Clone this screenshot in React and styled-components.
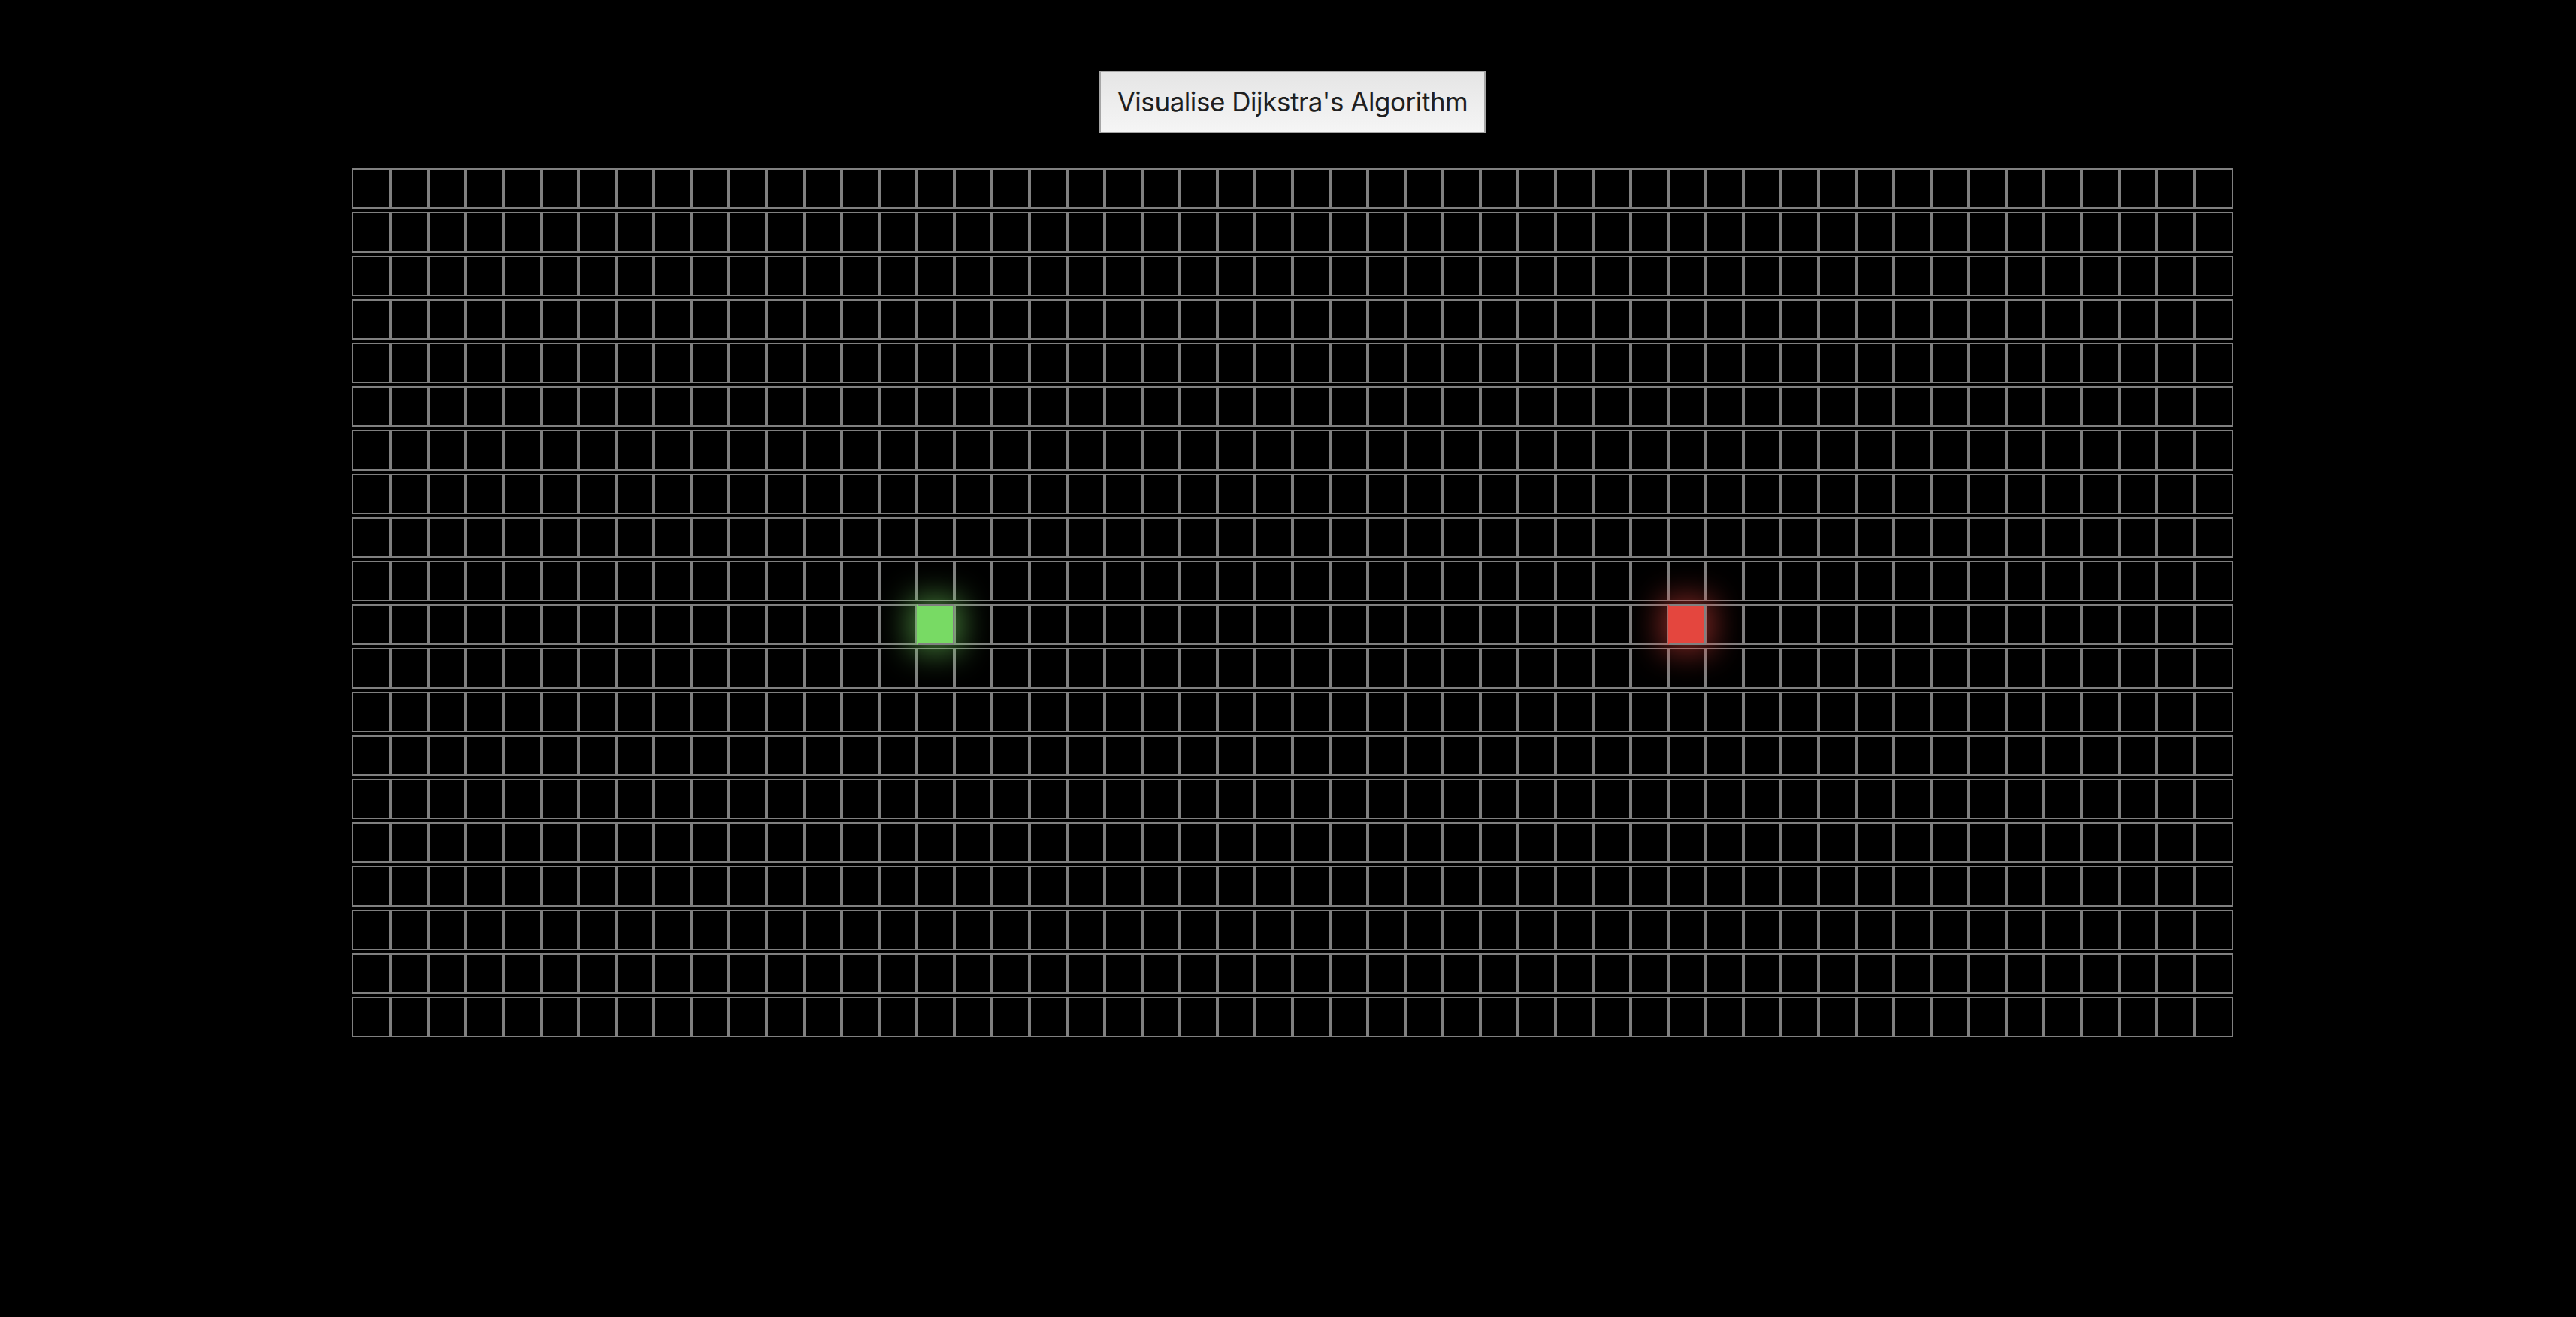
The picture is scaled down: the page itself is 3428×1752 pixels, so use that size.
import React from "react";
import styled, { createGlobalStyle, css } from "styled-components";

const ROWS = 20;
const COLS = 50;
const START = { row: 10, col: 15 };
const FINISH = { row: 10, col: 35 };

const GlobalStyle = createGlobalStyle`
  html, body {
    margin: 0;
    padding: 0;
    background: #000;
  }
  body {
    font-family: Inter, "Noto Sans", "Liberation Sans", sans-serif;
  }
`;

const Page = styled.main`
  min-height: 1752px;
  background: #000;
  display: flex;
  flex-direction: column;
  align-items: center;
  padding-top: 94px;
  padding-left: 12px;
  box-sizing: border-box;
`;

const Toolbar = styled.div`
  display: flex;
  justify-content: center;
  width: 100%;
`;

const VisualiseButton = styled.button`
  font-family: Inter, "Noto Sans", "Liberation Sans", sans-serif;
  font-size: 35px;
  letter-spacing: -0.45px;
  line-height: 43px;
  color: #1f1f1f;
  height: 83px;
  padding: 0 22px;
  border: 2px solid #a6a6a6;
  border-radius: 0;
  background: linear-gradient(#e5e5e5, #f5f5f5);
  cursor: pointer;
`;

const GridWrap = styled.div`
  display: flex;
  justify-content: center;
  width: 100%;
  margin-top: 47px;
`;

const Grid = styled.div`
  display: flex;
  flex-direction: column;
  gap: 4px;
`;

const Row = styled.div`
  display: flex;
`;

const kinds = {
  start: { fill: "#78da64", glow: "rgba(120, 218, 100, 0.55)" },
  finish: { fill: "#e4463e", glow: "rgba(228, 70, 62, 0.55)" },
};

const Cell = styled.div`
  box-sizing: border-box;
  width: 50px;
  height: 54px;
  border: 2px solid #808080;
  background: #000;
  flex: none;

  &:first-child,
  &:last-child {
    width: 52px;
  }

  ${({ $kind }) =>
    $kind &&
    css`
      position: relative;
      z-index: 1;
      background: ${kinds[$kind].fill};
      border-left-color: ${kinds[$kind].fill};
      box-shadow: 0 0 40px 10px ${kinds[$kind].glow};
    `}
`;

function kindOf(r, c) {
  if (r === START.row && c === START.col) return "start";
  if (r === FINISH.row && c === FINISH.col) return "finish";
  return undefined;
}

export default function App() {
  const rows = Array.from({ length: ROWS }, (_, r) => r);
  const cols = Array.from({ length: COLS }, (_, c) => c);
  return (
    <>
      <GlobalStyle />
      <Page>
        <Toolbar>
          <VisualiseButton>Visualise Dijkstra's Algorithm</VisualiseButton>
        </Toolbar>
        <GridWrap>
          <Grid>
            {rows.map((r) => (
              <Row key={r}>
                {cols.map((c) => (
                  <Cell key={c} $kind={kindOf(r, c)} />
                ))}
              </Row>
            ))}
          </Grid>
        </GridWrap>
      </Page>
    </>
  );
}
